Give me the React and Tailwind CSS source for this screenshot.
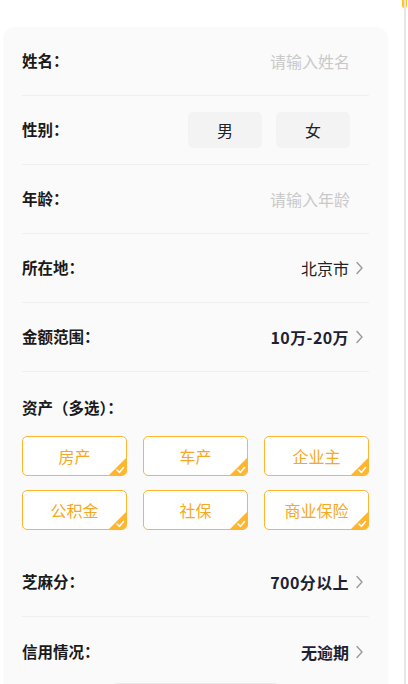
import { useState } from 'react';

const font = { fontFamily: '"Noto Sans CJK SC", "Noto Sans", sans-serif' };

function Chevron() {
  return (
    <svg width="9" height="14" viewBox="0 0 9 14" className="ml-[6px]">
      <path d="M2 1.5 L7 7 L2 12.5" fill="none" stroke="#9a9a9a" strokeWidth="1.4" strokeLinecap="round" strokeLinejoin="round" />
    </svg>
  );
}

function Row({ label, children, last }) {
  return (
    <div className={`h-[69px] mx-[19px] flex items-center justify-between ${last ? '' : 'border-b border-[#efefef]'}`}>
      <span className="text-[15.5px] font-bold text-[#1a1a1a]">{label}</span>
      <div className="flex items-center pr-[5px]">{children}</div>
    </div>
  );
}

function Tag({ text }) {
  return (
    <div className="relative h-[40px] rounded-[5px] border-[1.5px] border-[#ffb52e] bg-white flex items-center justify-center overflow-hidden">
      <span className="text-[16px] text-[#f7a823]">{text}</span>
      {/* selected corner mark */}
      <svg width="17" height="17" viewBox="0 0 17 17" className="absolute right-0 bottom-0">
        <path d="M17 0 L17 17 L0 17 Z" fill="#ffb52e" />
        <path d="M8 12 L10.5 14.3 L14.5 9.5" fill="none" stroke="#fff" strokeWidth="1.6" strokeLinecap="round" strokeLinejoin="round" />
      </svg>
    </div>
  );
}

export default function App() {
  const [sex, setSex] = useState(null);
  const assets = ['房产', '车产', '企业主', '公积金', '社保', '商业保险'];

  return (
    <div className="relative w-[408px] h-[684px] overflow-hidden bg-white" style={font}>
      {/* decoration corner + scroll edge */}
      <div className="absolute top-[-6px] right-[1px] w-[5px] h-[14px] rounded-b-full bg-[#ffc619]" />
      <div className="absolute top-0 right-[2px] w-[2px] h-full bg-[#e6e6e6]" />

      <div className="pt-[27px] pl-[3px] pr-[20px]">
        <div className="bg-[#fafafa] rounded-[12px] pb-[20px]">
          <Row label="姓名：">
            <input
              placeholder="请输入姓名"
              className="w-[140px] text-right text-[16px] bg-transparent outline-none placeholder:text-[#c9c9c9] mr-[14px]"
            />
          </Row>
          <Row label="性别：">
            <div className="flex gap-[14px] mr-[14px]">
              {['男', '女'].map((s) => (
                <button
                  key={s}
                  onClick={() => setSex(s)}
                  className={`w-[74px] h-[36px] rounded-[5px] text-[16px] ${sex === s ? 'bg-[#fff4dc] text-[#f7a823]' : 'bg-[#f3f3f3] text-[#222]'}`}
                >
                  {s}
                </button>
              ))}
            </div>
          </Row>
          <Row label="年龄：">
            <input
              placeholder="请输入年龄"
              className="w-[140px] text-right text-[16px] bg-transparent outline-none placeholder:text-[#c9c9c9] mr-[14px]"
            />
          </Row>
          <Row label="所在地：">
            <span className="text-[16px] text-[#222]">北京市</span>
            <Chevron />
          </Row>
          <Row label="金额范围：">
            <span className="text-[16px] font-bold tracking-[0.4px] text-[#1c2233]">10万-20万</span>
            <Chevron />
          </Row>

          {/* asset multi-select */}
          <div className="mx-[19px] pt-[24px] pb-[18px]">
            <div className="text-[15.5px] font-bold text-[#1a1a1a] leading-[22px]">资产（多选）：</div>
            <div className="grid grid-cols-3 gap-x-[16px] gap-y-[14px] mt-[18px]">
              {assets.map((a) => <Tag key={a} text={a} />)}
            </div>
          </div>

          <Row label="芝麻分：">
            <span className="text-[16px] font-bold tracking-[0.4px] text-[#1c2233]">700分以上</span>
            <Chevron />
          </Row>
          <Row label="信用情况：" last>
            <span className="text-[16px] font-bold text-[#1c2233]">无逾期</span>
            <Chevron />
          </Row>
        </div>
      </div>

      {/* bottom button edge */}
      <div className="absolute left-[112px] top-[683px] w-[168px] h-[10px] rounded-t-[6px] bg-[#e9e9e9]" />
    </div>
  );
}
